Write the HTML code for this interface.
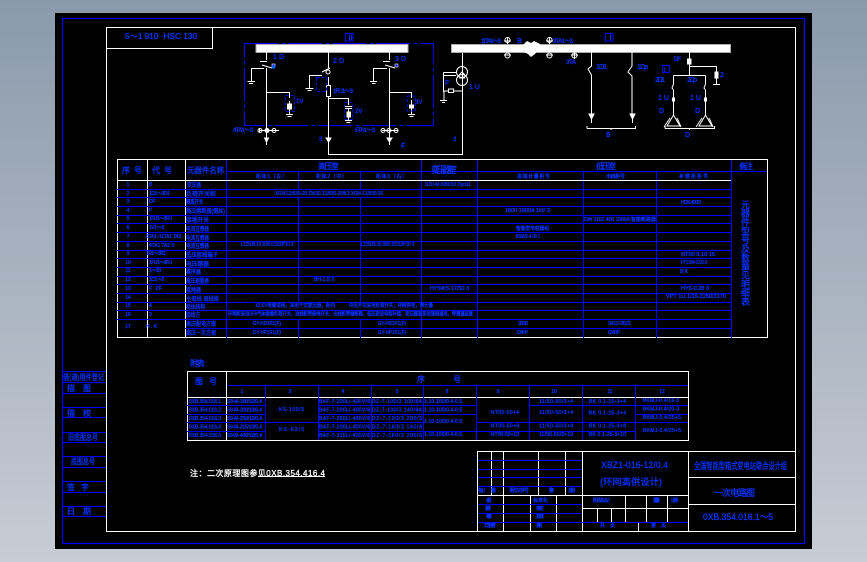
<!DOCTYPE html>
<html><head><meta charset="utf-8"><style>
html,body{margin:0;padding:0;width:867px;height:562px;overflow:hidden;background:linear-gradient(#8a9aac,#c8ccd4)}
svg{position:absolute;left:0;top:0;display:block}
text{font-family:"Liberation Sans","Noto Sans CJK SC",sans-serif;fill:#0a32ff;stroke:#0a32ff;stroke-width:.3;font-size:6px}
.b{stroke:#00f;fill:none;stroke-width:1}
.w{stroke:#fff;fill:none;stroke-width:1}
.c{text-anchor:middle}
.t{font-size:8px}
.s{font-size:5px}
</style></head><body>
<svg width="867" height="562" viewBox="0 0 867 562">
<rect x="55" y="13" width="757" height="536" fill="#000"/>
<rect x="62.5" y="18.5" width="742" height="525" fill="none" stroke="#00f" stroke-width="1.2"/>
<rect x="106.5" y="27.5" width="689" height="504" class="w"/>
<path class="w" d="M106 48.5H212.5V27"/>
<text x="125" y="39" textLength="72" lengthAdjust="spacingAndGlyphs" style="font-size:8px">5～1 910 ·HSC 130</text>

<!-- left strip -->
<path class="b" shape-rendering="crispEdges" d="M62 371.5H106M62 382.5H106M62 393.5H106M62 407.5H106M62 417.5H106M62 432.5H106M62 442.5H106M62 456.5H106M62 467.5H106M62 481.5H106M62 492.5H106M62 506.5H106M62 516.5H106"/>
<g>
<text x="63" y="380" class="t" textLength="41" lengthAdjust="spacingAndGlyphs">借(通)用件登记</text>
<text x="67" y="391" class="t" textLength="24" lengthAdjust="spacing">描图</text>
<text x="67" y="416" class="t" textLength="24" lengthAdjust="spacing">描校</text>
<text x="68" y="440" class="t" textLength="30" lengthAdjust="spacingAndGlyphs">旧底图总号</text>
<text x="71" y="464" class="t" textLength="24" lengthAdjust="spacingAndGlyphs">底图总号</text>
<text x="67" y="490" class="t" textLength="22" lengthAdjust="spacing">签字</text>
<text x="67" y="514" class="t" textLength="24" lengthAdjust="spacing">日期</text>
</g>

<!-- schematic left -->
<rect x="244.5" y="43.5" width="189" height="82" fill="none" stroke="#00f" stroke-dasharray="34 3 4 3"/>
<rect x="256" y="44.5" width="152" height="8" fill="#fff" stroke="#aaa"/>
<rect x="345.5" y="33.5" width="7.500" height="7.500" fill="none" stroke="#00f"/>
<text x="347" y="40" style="font-size:7px">Ⅱ</text>
<g class="w">
<path class="w" d="M266.500 52V60M260 61.500H267M266.500 68V140M262 65L272 68M264 68.500H251.500V81M247.500 81.500H255M249 83.500H253"/>
<path class="w" d="M266.500 92.500H289.500V98M289.500 101V115M286 114.500H293M287.500 116.500H291.500"/>
<rect x="287.500" y="104" width="4" height="5" fill="#fff"/>
<rect x="272" y="64" width="3" height="3" fill="#00f" stroke="#fff" stroke-width=".6"/>
<path class="w" d="M328.500 52V68M322 72L330 68M322 75.500H309.500V88M305.500 88.500H313.500M307.500 90.500H311.500M328.500 77V85M328.500 97V154.500H462.500V52"/>
<circle cx="328" cy="72" r="2" class="w"/>
<rect x="326.500" y="85.500" width="4" height="11" fill="#000" stroke="#fff"/>
<path class="w" d="M328.500 98.500H348.500V105M345 106.500H352M345 108.500H352M348.500 108V121M345 120.500H352M346.500 122.500H350.500"/>
<rect x="347" y="112" width="3.500" height="5" fill="#fff"/>
<path class="w" d="M389.500 52V60M383 61.500H390M389.500 68V144M385 65L395 68M387 68.500H373.500V81M370 81.500H377M372 83.500H375.500"/>
<rect x="395" y="64" width="3" height="3" fill="#00f" stroke="#fff" stroke-width=".6"/>
<path class="w" d="M389.500 92.500H411.500V98M411.500 100V114M408 114.500H415M409.500 116.500H413.500"/>
<rect x="409.500" y="105" width="4" height="3" fill="#fff"/>
<path class="w" d="M259 130.500H279M382 130.500H398M259.500 128V133"/>
<circle cx="260" cy="130.500" r="2" class="w"/><circle cx="267" cy="130.500" r="2" fill="#fff"/><circle cx="274" cy="130.500" r="2" class="w"/>
<circle cx="383" cy="130.500" r="2" class="w"/><circle cx="389" cy="130.500" r="2" class="w"/><circle cx="396" cy="130.500" r="2" class="w"/>
<path d="M264.500 138H268.500L266.500 142Z M326 138H331L328.500 142Z M387 138H392L389.500 142Z" fill="#fff"/>
<path class="w" d="M266.500 142V145M389.500 142V145"/>
</g>
<rect x="316.500" y="77.500" width="10" height="14" fill="none" stroke="#00f" stroke-dasharray="3 2"/>
<rect x="285.500" y="95.500" width="9" height="16" fill="none" stroke="#00f" stroke-dasharray="3 2"/>
<rect x="344.500" y="102.500" width="8" height="17" fill="none" stroke="#00f" stroke-dasharray="3 2"/>
<rect x="407.500" y="96" width="8" height="15" fill="none" stroke="#00f" stroke-dasharray="3 2"/>
<circle cx="273.500" cy="67" r="1.800" fill="#06f"/>
<text x="273" y="59" style="font-size:7px" textLength="11">1 D</text>
<text x="333" y="63" style="font-size:7px" textLength="11">2D</text>
<text x="395" y="61" style="font-size:7px" textLength="11">3D</text>
<text x="333" y="93" style="font-size:6px" textLength="20">1FU1～3</text>
<text x="296" y="103" style="font-size:6px">1V</text>
<text x="355" y="113" style="font-size:6px">2V</text>
<text x="415" y="104" style="font-size:6px">3V</text>
<text x="233" y="132" style="font-size:6px" textLength="20">4TA1～3</text>
<text x="355" y="132" style="font-size:6px" textLength="20">5TA1～3</text>
<text x="319" y="141" style="font-size:6px">3</text>
<text x="401" y="148" style="font-size:7px">F</text>

<!-- schematic right -->
<rect x="451.500" y="44.500" width="279" height="8" fill="#fff" stroke="#aaa"/>
<path d="M523 45L527 41L531 43L534 41L540 44V46L538 50L535 54L531 57L528 54L524 52Z" fill="#fff"/>
<rect x="605.500" y="33.500" width="7.500" height="7.500" fill="none" stroke="#00f"/>
<text x="607" y="40" style="font-size:7px">Ⅰ</text>
<text x="481" y="43" style="font-size:6px" textLength="20">11TA1～3</text>
<text x="517" y="43" style="font-size:7px">B</text>
<text x="553" y="43" style="font-size:6px" textLength="20">3TA1～3</text>
<text x="566" y="64" style="font-size:6px" textLength="10">3TA</text>
<g class="w">
<path class="w" d="M504 41H511M507.500 37V44M504 55H511M546 41H553M549.500 37V44M546 55H553M571 55H578M574.500 52V59"/>
<circle cx="507.500" cy="40" r="2.500" class="w"/><circle cx="507.500" cy="55.500" r="2.500" class="w"/>
<circle cx="549.500" cy="40" r="2.500" class="w"/><circle cx="549.500" cy="55.500" r="2.500" class="w"/>
<circle cx="574.500" cy="55.500" r="2.500" class="w"/>
<circle cx="462" cy="72" r="5.500" class="w"/><circle cx="462" cy="80" r="5.500" class="w"/>
<path class="w" d="M459 75L462 72L465 75M459 78H465M443.500 72.500H456M443.500 72.500V91.500H444M444 75.500H456M444 91H462M444 91V100M440 100.500H447M442 102.500H445"/>
<rect x="448.500" y="89" width="5" height="3.500" fill="#000" stroke="#fff"/>
<path class="w" d="M591.500 52V66L588 69L591.500 75V115M632 52V66L628 72L632 76V115M587 128.500V126M587 128.500H635.500V126M611 128.500V130"/>
<path d="M589 114H594L591.500 119Z M630 114H635L632.500 119Z" fill="#fff"/>
<path class="w" d="M591.500 119V123M632.500 119V123M689.500 52V75.500M673.500 75.500H705.500M689.500 66.500H716.500V73M716.500 76V84M713 84.500H720M673.500 75.500V84L672 88L673.500 90V98M673.500 101V115M705.500 75.500V84L704 88L705.500 90V98M705.500 101V115"/>
<rect x="687.500" y="59" width="3.500" height="5" fill="#fff"/>
<rect x="715" y="72" width="3" height="6" fill="#fff"/>
<rect x="672.500" y="98" width="2" height="3" fill="#fff"/><rect x="704.500" y="98" width="2" height="3" fill="#fff"/>
<path class="w" d="M673.500 115L667 126H680ZM670 118L664 127M677 118L681 127M705.500 115L699 126H712ZM702 118L696 127M709 118L713 127"/>
<path class="w" d="M665 128.500V126M665 128.500H714.500V126M689.500 128.500V130"/>
</g>
<rect x="662.500" y="65.500" width="7" height="7" fill="none" stroke="#00f"/>
<text x="664" y="72" style="font-size:6px">I</text>
<text x="469" y="89" style="font-size:7px">1 U</text>
<text x="445" y="85" style="font-size:7px">F</text>
<text x="453" y="141" style="font-size:6px">3</text>
<text x="596" y="69" style="font-size:7px" textLength="11">1D1</text>
<text x="637" y="69" style="font-size:7px" textLength="11">1Dp</text>
<text x="674" y="61" style="font-size:6px" textLength="7">DF</text>
<text x="720" y="77" style="font-size:7px">2</text>
<text x="655" y="82" style="font-size:7px" textLength="10">2D1</text>
<text x="687" y="82" style="font-size:7px" textLength="10">2Dp</text>
<text x="658" y="100" style="font-size:7px">1 U</text>
<text x="690" y="100" style="font-size:7px">1 U</text>
<text x="659" y="113" style="font-size:7px">D</text>
<text x="695" y="113" style="font-size:7px">D</text>
<text x="606" y="137" style="font-size:7px">B</text>
<text x="685" y="137" style="font-size:7px">D</text>

<!-- main table -->
<g shape-rendering="crispEdges">
<rect x="117.500" y="159.500" width="650" height="178" fill="none" stroke="#fff"/>
<path class="w" d="M117 180.500H731M147.500 160V338M185.500 160V338"/>
<path class="b" d="M117 189.500H731M117 197.500H731M117 206.500H731M117 215.500H731M117 223.500H731M117 232.500H731M117 241.500H731M117 250.500H731M117 258.500H731M117 267.500H731M117 276.500H731M117 284.500H731M117 293.500H731M117 302.500H731M117 310.500H731M117 319.500H731M185 328.500H731"/>
<path class="b" d="M226.500 160V338M298.500 171V189M298.500 197V302M298.500 319V338M360.500 171V189M360.500 197V302M360.500 319V338M421.500 160V338M477.500 160V338M583.500 171V338M656.500 171V338M731.500 160V338M226 171.500H767"/>
<path class="w" d="M226 180.500H731"/>
</g>
<g>
<text x="122" y="173" class="t" textLength="20" lengthAdjust="spacing">序号</text>
<text x="152" y="173" class="t" textLength="20" lengthAdjust="spacing">代号</text>
<text x="187" y="173" class="t" textLength="37" lengthAdjust="spacingAndGlyphs">元器件名称</text>
<text x="318" y="169" class="t" textLength="21">高压室</text>
<text x="431" y="173" textLength="26" style="font-size:9px">变压器室</text>
<text x="596" y="169" class="t" textLength="20">低压室</text>
<text x="739" y="169" class="t" textLength="14">备注</text>
<text x="256" y="178" class="s" textLength="31">柜体1（左）</text>
<text x="316" y="178" class="s" textLength="31">柜体2（中）</text>
<text x="376" y="178" class="s" textLength="31">柜体3（右）</text>
<text x="517" y="178" class="s" textLength="33">进线计量柜号</text>
<text x="606" y="178" class="s" textLength="19">出线柜号</text>
<text x="679" y="178" class="s" textLength="29">补偿柜柜号</text>
</g>
<g>
<text class="s c" x="128" y="186">1</text><text class="s c" x="128" y="195">2</text><text class="s c" x="128" y="203">3</text><text class="s c" x="128" y="212">4</text><text class="s c" x="128" y="220">5</text><text class="s c" x="128" y="229">6</text><text class="s c" x="128" y="238">7</text><text class="s c" x="128" y="247">8</text><text class="s c" x="128" y="255">9</text><text class="s c" x="128" y="264">10</text><text class="s c" x="128" y="272">11</text><text class="s c" x="128" y="281">12</text><text class="s c" x="128" y="290">13</text><text class="s c" x="128" y="299">14</text><text class="s c" x="128" y="307">15</text><text class="s c" x="128" y="316">16</text><text class="s c" x="128" y="328">17</text>
<text class="s" x="149" y="186">B</text>
<text class="s" x="149" y="195" textLength="21">1D1～3D1</text>
<text class="s" x="149" y="203">DF</text>
<text class="s" x="149" y="212">F</text>
<text class="s" x="149" y="220" textLength="23">1FU1～3FU</text>
<text class="s" x="149" y="229" textLength="15">1V1～3</text>
<text class="s" x="146" y="238" textLength="35">6TA1~11TA1 TA3</text>
<text class="s" x="149" y="247" textLength="25">4TA1 TA2 3</text>
<text class="s" x="146" y="255" textLength="20">1R1～3R1</text>
<text class="s" x="149" y="264" textLength="23">1FU1～3FU</text>
<text class="s" x="149" y="272" textLength="12">1～10</text>
<text class="s" x="149" y="281" textLength="15">1C1～3</text>
<text class="s" x="149" y="290" textLength="13">F 2F</text>
<text class="s" x="149" y="307">4</text>
<text class="s" x="149" y="316">3</text>
<text class="s" x="146" y="328" textLength="11">H.K</text>
</g>
<g>
<text x="187" y="187" textLength="14" lengthAdjust="spacingAndGlyphs">变压器</text>
<text x="186" y="196" textLength="30" lengthAdjust="spacingAndGlyphs">负荷开关柜</text>
<text x="186" y="204" textLength="17" lengthAdjust="spacingAndGlyphs">隔离开关</text>
<text x="186" y="213" textLength="39" lengthAdjust="spacingAndGlyphs">高压熔断器(熔丝)</text>
<text x="186" y="222" textLength="23" lengthAdjust="spacingAndGlyphs">接地开关</text>
<text x="186" y="231" textLength="23" lengthAdjust="spacingAndGlyphs">电流互感器</text>
<text x="186" y="240" textLength="23" lengthAdjust="spacingAndGlyphs">电流互感器</text>
<text x="186" y="248" textLength="23" lengthAdjust="spacingAndGlyphs">电流互感器</text>
<text x="186" y="257" textLength="32" lengthAdjust="spacingAndGlyphs">低压接线端子</text>
<text x="186" y="266" textLength="23" lengthAdjust="spacingAndGlyphs">电压熔器</text>
<text x="186" y="274" textLength="15" lengthAdjust="spacingAndGlyphs">零序器</text>
<text x="186" y="283" textLength="23" lengthAdjust="spacingAndGlyphs">高压避雷器</text>
<text x="186" y="292" textLength="15" lengthAdjust="spacingAndGlyphs">接地器</text>
<text x="186" y="301" textLength="33" lengthAdjust="spacingAndGlyphs">主母线 母线排</text>
<text x="186" y="309" textLength="19" lengthAdjust="spacingAndGlyphs">柜体结构</text>
<text x="186" y="317" textLength="14" lengthAdjust="spacingAndGlyphs">接线方</text>
<text x="186" y="326" textLength="30" lengthAdjust="spacingAndGlyphs">高压配电方案</text>
<text x="186" y="335" textLength="30" lengthAdjust="spacingAndGlyphs">高压一次方案</text>
</g>
<g>
<text class="s" x="275" y="195" textLength="108" lengthAdjust="spacingAndGlyphs">XGN-12/630-20 ZW32-12/630-20/K1 XGN-12/630-20</text>
<text class="s" x="241" y="246" textLength="52" lengthAdjust="spacingAndGlyphs">LZZBJ9-10 30/5 0.5/10P10 3</text>
<text class="s" x="361" y="246" textLength="53" lengthAdjust="spacingAndGlyphs">LZZBJ9-10 30/5 0.5/10P10 3</text>
<text class="s" x="314" y="281" textLength="20" lengthAdjust="spacingAndGlyphs">BH-1.5 3</text>
<text class="s" x="255" y="307" textLength="80" lengthAdjust="spacingAndGlyphs">10 KV电缆进线，采用干式变压器，柜内</text>
<text class="s" x="349" y="307" textLength="84" lengthAdjust="spacingAndGlyphs">中压开关采用负荷开关，环网供电，带计量</text>
<text class="s" x="228" y="315.500" textLength="245" lengthAdjust="spacingAndGlyphs">环网柜采用SF6气体绝缘负荷开关，进线柜带接地开关，出线柜带熔断器，低压室设电容补偿，变压器室采用强制通风，带测温装置</text>
<text class="s" x="253" y="325" textLength="28" lengthAdjust="spacingAndGlyphs">GY-HD1R1(F)</text>
<text class="s" x="378" y="325" textLength="28" lengthAdjust="spacingAndGlyphs">GY-HD1R1(F)</text>
<text class="s" x="518" y="325" textLength="10">3530</text>
<text class="s" x="608" y="325" textLength="23">3412-0521</text>
<text class="s" x="253" y="334" textLength="28" lengthAdjust="spacingAndGlyphs">GY-HP1R1(F)</text>
<text class="s" x="378" y="334" textLength="28" lengthAdjust="spacingAndGlyphs">GY-HP1R1(F)</text>
<text class="s" x="517" y="334" textLength="11">GY-HP</text>
<text class="s" x="608" y="334" textLength="12">GY-HP</text>
<text class="s" x="425" y="186" textLength="46" lengthAdjust="spacingAndGlyphs">S10-M-500/10 Dyn11</text>
<text class="s" x="430" y="290" textLength="39" lengthAdjust="spacingAndGlyphs">HY5WS-17/50 3</text>
<text class="s" x="681" y="204" textLength="20">HDS-400/3</text>
<text class="s" x="505" y="212" textLength="45" lengthAdjust="spacingAndGlyphs">1600 1600A 1kV 3</text>
<text class="s" x="584" y="221" textLength="72" lengthAdjust="spacingAndGlyphs">DW 1152 400 1000A 智能断路器</text>
<text class="s" x="516" y="230" textLength="33" lengthAdjust="spacingAndGlyphs">智能型电容器组</text>
<text class="s" x="516" y="238" textLength="24" lengthAdjust="spacingAndGlyphs">BSMJ0.4-30 1</text>
<text class="s" x="681" y="256" textLength="34" lengthAdjust="spacingAndGlyphs">NT00 5.10 15</text>
<text class="s" x="681" y="264" textLength="26" lengthAdjust="spacingAndGlyphs">HY1.5W-0.5/2.6</text>
<text class="s" x="680" y="273" textLength="8">BK</text>
<text class="s" x="681" y="290" textLength="28" lengthAdjust="spacingAndGlyphs">HY5-0.28 3</text>
<text class="s" x="666" y="298" textLength="60" lengthAdjust="spacingAndGlyphs">VPT 1U 1/15-1250/3170</text>
</g>
<text x="745" y="200" style="writing-mode:vertical-rl;font-size:9px" textLength="106">元器件型号及数量见明细表</text>

<!-- lower table -->
<text x="190" y="366" class="t" textLength="15">附表:</text>
<g shape-rendering="crispEdges">
<rect x="187.500" y="371.500" width="501" height="69" fill="none" stroke="#fff"/>
<path class="w" d="M187 397.500H688M226.500 371V440"/>
<path class="b" d="M227 385.500H688M265.500 385V440M318.500 385V440M371.500 385V440M423.500 385V440M476.500 385V440M529.500 385V440M582.500 385V440M635.500 385V440"/>
<path class="b" d="M187 405.500H265M318 405.500H476M187 414.500H265M318 414.500H476M187 422.500H423M476 422.500H688M187 431.500H265M318 431.500H635M529 405.500H635M635 405.500H688M635 414.500H688"/>
</g>
<text x="195" y="384" class="t" textLength="22" lengthAdjust="spacing">图号</text>
<text x="417" y="382" class="t" textLength="44" lengthAdjust="spacing">序号</text>
<g>
<text class="s c" x="242" y="393">1</text><text class="s c" x="290" y="393">3</text><text class="s c" x="343" y="393">4</text><text class="s c" x="397" y="393">5</text><text class="s c" x="447" y="393">8</text><text class="s c" x="498" y="393">9</text><text class="s c" x="554" y="393">10</text><text class="s c" x="610" y="393">11</text><text class="s c" x="662" y="393">12</text>
<text class="s" x="189" y="403" textLength="32">0XB.354.016.1</text><text class="s" x="189" y="411.500" textLength="32">0XB.354.016.2</text><text class="s" x="189" y="420" textLength="32">0XB.354.016.3</text><text class="s" x="189" y="428.500" textLength="32">0XB.354.016.4</text><text class="s" x="189" y="437" textLength="32">0XB.354.016.5</text>
<text class="s" x="227" y="403" textLength="35">S9-M-160/10/0.4</text><text class="s" x="227" y="411.500" textLength="35">S9-M-200/10/0.4</text><text class="s" x="227" y="420" textLength="35">S9-M-250/10/0.4</text><text class="s" x="227" y="428.500" textLength="35">S9-M-315/10/0.4</text><text class="s" x="227" y="437" textLength="35">S9-M-400/10/0.4</text>
<text class="s" x="279" y="411" textLength="25">KS-100/5</text><text class="s" x="279" y="431" textLength="25">KS-63/5</text>
<text class="s" x="319" y="403" textLength="51">BAF-7-200L/-400V/6</text><text class="s" x="319" y="411.500" textLength="51">BAF-7-200L/-400V/6</text><text class="s" x="319" y="420" textLength="51">BAF-7-250L/-400V/6</text><text class="s" x="319" y="428.500" textLength="51">BAF-7-200L/-400V/6</text><text class="s" x="319" y="437" textLength="51">BAF-7-315L/-400V/6</text>
<text class="s" x="372" y="403" textLength="50">DZ-7-100/3 100/6A</text><text class="s" x="372" y="411.500" textLength="50">DZ-7-100/3 140/6A</text><text class="s" x="372" y="420" textLength="50">DZ-7-100/3 200/5</text><text class="s" x="372" y="428.500" textLength="50">DZ-7-160/3 140/6</text><text class="s" x="372" y="437" textLength="50">DZ-7-160/3 200/5</text>
<text class="s" x="424" y="403" textLength="38">1-10-100/0.4-0.5</text><text class="s" x="424" y="411.500" textLength="38">1-10-100/0.4-0.5</text><text class="s" x="424" y="423" textLength="38">1-10-100/0.4-0.5</text><text class="s" x="424" y="436" textLength="38">1-10-100/0.4-0.5</text>
<text class="s" x="491" y="414" textLength="28">NT00-50+4</text><text class="s" x="491" y="427.500" textLength="28">NT00-50+8</text><text class="s" x="491" y="436" textLength="28">NT00-50+10</text>
<text class="s" x="539" y="403" textLength="34">11/50-50/3+4</text><text class="s" x="539" y="414" textLength="34">11/50-50/3+4</text><text class="s" x="539" y="427.500" textLength="34">11/50-50/3+8</text><text class="s" x="539" y="436" textLength="34">11/50-50/3+10</text>
<text class="s" x="589" y="403" textLength="37">BK 0.1-25-3+4</text><text class="s" x="589" y="414.500" textLength="37">BK 0.1-25-3+4</text><text class="s" x="589" y="427.500" textLength="37">BK 0.1-25-3+8</text><text class="s" x="589" y="436" textLength="37">BK 0.1-25-3+10</text>
<text class="s" x="643" y="402" textLength="36">BKMJ-0.4/16-3</text><text class="s" x="643" y="410.500" textLength="36">BKMJ-0.4/20-3</text><text class="s" x="643" y="419" textLength="38">BKMJ-0.4/25+5</text><text class="s" x="643" y="432" textLength="38">BKMJ-0.4/25+5</text>
</g>

<text x="190" y="476" style="fill:#fff;stroke:#fff;font-size:8px" textLength="135" lengthAdjust="spacing">注：二次原理图参见0XB.354.416.4</text>
<path class="w" d="M258 476.500H325" stroke-width=".7"/>

<!-- title block -->
<g shape-rendering="crispEdges">
<path class="w" d="M477.500 451.500H795M477.500 451V531M491.500 451V495M503.500 451V531M538.500 451V495M565.500 451V495M582.500 451V531M688.500 451V531M477 495.500H688M530.500 495V531M556.500 495V531M688 477.500H795M688 504.500H795M582 508.500H688M597.500 508V522M611.500 508V522M625.500 495V522M646.500 495V522M667.500 495V522M638.500 522V531"/>
<path class="b" d="M478 460.500H582M478 469.500H582M478 477.500H582M478 486.500H582M478 504.500H582M478 513.500H582M478 522.500H688"/>
</g>
<g>
<text x="601" y="468" style="font-size:9px" textLength="67" lengthAdjust="spacingAndGlyphs">XBZ1-016-12/0.4</text>
<text x="600" y="485" style="font-size:9px" textLength="62" lengthAdjust="spacingAndGlyphs">(环网高供设计)</text>
<text x="694" y="469" style="font-size:9px" textLength="93" lengthAdjust="spacingAndGlyphs">全国智能型箱式变电站联合设计组</text>
<text x="714" y="496" style="font-size:9px" textLength="41" lengthAdjust="spacing">一次电路图</text>
<text x="703" y="520" style="font-size:9px" textLength="70" lengthAdjust="spacingAndGlyphs">0XB.354.016.1～5</text>
<text class="s" x="478" y="492" textLength="7">标记</text><text class="s" x="491" y="492" textLength="5">处数</text><text class="s" x="509" y="492" textLength="20">更改文件号</text><text class="s" x="549" y="492" textLength="5">签字</text><text class="s" x="568" y="492" textLength="7">日期</text>
<text class="s" x="486" y="502" textLength="6">设计</text><text class="s" x="485" y="510" textLength="6">校对</text><text class="s" x="486" y="518" textLength="6">审核</text><text class="s" x="483" y="527" textLength="13">工艺检查</text>
<text class="s" x="533" y="502" textLength="15">标准化</text><text class="s" x="536" y="510" textLength="8">审定</text><text class="s" x="536" y="518" textLength="8">批准</text><text class="s" x="536" y="527" textLength="6">日期</text>
<text class="s" x="593" y="502" textLength="17">阶段标记</text><text class="s" x="653" y="502" textLength="7">重量</text><text class="s" x="671" y="502" textLength="7">比例</text>
<text class="s" x="600" y="527" textLength="15">共 页</text><text class="s" x="651" y="527" textLength="15">第 页</text>
</g>
</svg>
</body></html>
